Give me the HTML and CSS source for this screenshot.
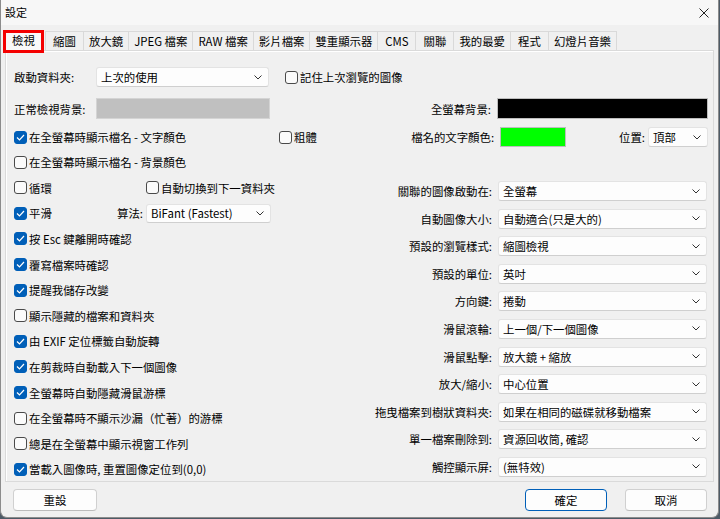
FILE: index.html
```html
<!DOCTYPE html>
<html lang="zh-Hant">
<head>
    <meta charset="UTF-8">
    <title>設定</title>
    <link rel="stylesheet" href="styles.css">
</head>
<body>
<div class="window">
    <div class="titlebar">
        <span class="title">設定</span>
        <svg class="close" width="10" height="10" viewBox="0 0 10 10"><path d="M0.5 0.5 L9.5 9.5 M9.5 0.5 L0.5 9.5" stroke="#222" stroke-width="1" fill="none"/></svg>
    </div>

    <!-- tab strip -->
    <div class="tabs">
        <div class="tab active">檢視</div>
        <div class="tab">縮圖</div>
        <div class="tab">放大鏡</div>
        <div class="tab">JPEG 檔案</div>
        <div class="tab">RAW 檔案</div>
        <div class="tab">影片檔案</div>
        <div class="tab">雙重顯示器</div>
        <div class="tab">CMS</div>
        <div class="tab">關聯</div>
        <div class="tab">我的最愛</div>
        <div class="tab">程式</div>
        <div class="tab">幻燈片音樂</div>
    </div>

    <div class="panel">
        <div class="row row-1">
            <span class="label lbl-left">啟動資料夾:</span>
            <div class="combo combo-start"><span>上次的使用</span><svg class="chev" width="8" height="5" viewBox="0 0 8 5"><path d="M0.5 0.5 L4 4 L7.5 0.5" stroke="#333" fill="none"/></svg></div>
            <label class="check check-remember"><span class="box"></span>記住上次瀏覽的圖像</label>
        </div>

        <div class="row row-2">
            <span class="label lbl-left">正常檢視背景:</span>
            <div class="swatch swatch-gray"></div>
            <div class="right-part">
                <span class="label">全螢幕背景:</span>
                <div class="swatch swatch-black"></div>
            </div>
        </div>

        <div class="row row-3">
            <label class="check check-name"><span class="box on"><svg width="9" height="7" viewBox="0 0 9 7"><path d="M1 3.5 L3.5 6 L8 1" stroke="#fff" stroke-width="1.2" fill="none"/></svg></span>在全螢幕時顯示檔名 - 文字顏色</label>
            <label class="check"><span class="box"></span>粗體</label>
            <div class="right-part">
                <span class="label">檔名的文字顏色:</span>
                <div class="swatch swatch-green"></div>
                <span class="label lbl-pos">位置:</span>
                <div class="combo combo-pos"><span>頂部</span><svg class="chev" width="8" height="5" viewBox="0 0 8 5"><path d="M0.5 0.5 L4 4 L7.5 0.5" stroke="#333" fill="none"/></svg></div>
            </div>
        </div>

        <div class="row row-4">
            <label class="check"><span class="box"></span>在全螢幕時顯示檔名 - 背景顏色</label>
        </div>

        <div class="columns">
            <div class="col-left">
                <div class="crow">
                    <label class="check check-loop"><span class="box"></span>循環</label>
                    <label class="check"><span class="box"></span>自動切換到下一資料夾</label>
                </div>
                <div class="crow">
                    <label class="check check-smooth"><span class="box on"><svg width="9" height="7" viewBox="0 0 9 7"><path d="M1 3.5 L3.5 6 L8 1" stroke="#fff" stroke-width="1.2" fill="none"/></svg></span>平滑</label>
                    <span class="label lbl-algo">算法:</span>
                    <div class="combo combo-algo"><span>BiFant (Fastest)</span><svg class="chev" width="8" height="5" viewBox="0 0 8 5"><path d="M0.5 0.5 L4 4 L7.5 0.5" stroke="#333" fill="none"/></svg></div>
                </div>
                <div class="crow"><label class="check"><span class="box on"><svg width="9" height="7" viewBox="0 0 9 7"><path d="M1 3.5 L3.5 6 L8 1" stroke="#fff" stroke-width="1.2" fill="none"/></svg></span>按 Esc 鍵離開時確認</label></div>
                <div class="crow"><label class="check"><span class="box on"><svg width="9" height="7" viewBox="0 0 9 7"><path d="M1 3.5 L3.5 6 L8 1" stroke="#fff" stroke-width="1.2" fill="none"/></svg></span>覆寫檔案時確認</label></div>
                <div class="crow"><label class="check"><span class="box on"><svg width="9" height="7" viewBox="0 0 9 7"><path d="M1 3.5 L3.5 6 L8 1" stroke="#fff" stroke-width="1.2" fill="none"/></svg></span>提醒我儲存改變</label></div>
                <div class="crow"><label class="check"><span class="box"></span>顯示隱藏的檔案和資料夾</label></div>
                <div class="crow"><label class="check"><span class="box on"><svg width="9" height="7" viewBox="0 0 9 7"><path d="M1 3.5 L3.5 6 L8 1" stroke="#fff" stroke-width="1.2" fill="none"/></svg></span>由 EXIF 定位標籤自動旋轉</label></div>
                <div class="crow"><label class="check"><span class="box on"><svg width="9" height="7" viewBox="0 0 9 7"><path d="M1 3.5 L3.5 6 L8 1" stroke="#fff" stroke-width="1.2" fill="none"/></svg></span>在剪裁時自動載入下一個圖像</label></div>
                <div class="crow"><label class="check"><span class="box on"><svg width="9" height="7" viewBox="0 0 9 7"><path d="M1 3.5 L3.5 6 L8 1" stroke="#fff" stroke-width="1.2" fill="none"/></svg></span>全螢幕時自動隱藏滑鼠游標</label></div>
                <div class="crow"><label class="check"><span class="box"></span>在全螢幕時不顯示沙漏（忙著）的游標</label></div>
                <div class="crow"><label class="check"><span class="box"></span>總是在全螢幕中顯示視窗工作列</label></div>
                <div class="crow"><label class="check"><span class="box on"><svg width="9" height="7" viewBox="0 0 9 7"><path d="M1 3.5 L3.5 6 L8 1" stroke="#fff" stroke-width="1.2" fill="none"/></svg></span>當載入圖像時, 重置圖像定位到(0,0)</label></div>
            </div>

            <div class="col-right">
                <span class="label">關聯的圖像啟動在:</span>
                <div class="combo"><span>全螢幕</span><svg class="chev" width="8" height="5" viewBox="0 0 8 5"><path d="M0.5 0.5 L4 4 L7.5 0.5" stroke="#333" fill="none"/></svg></div>
                <span class="label">自動圖像大小:</span>
                <div class="combo"><span>自動適合(只是大的)</span><svg class="chev" width="8" height="5" viewBox="0 0 8 5"><path d="M0.5 0.5 L4 4 L7.5 0.5" stroke="#333" fill="none"/></svg></div>
                <span class="label">預設的瀏覽樣式:</span>
                <div class="combo"><span>縮圖檢視</span><svg class="chev" width="8" height="5" viewBox="0 0 8 5"><path d="M0.5 0.5 L4 4 L7.5 0.5" stroke="#333" fill="none"/></svg></div>
                <span class="label">預設的單位:</span>
                <div class="combo"><span>英吋</span><svg class="chev" width="8" height="5" viewBox="0 0 8 5"><path d="M0.5 0.5 L4 4 L7.5 0.5" stroke="#333" fill="none"/></svg></div>
                <span class="label">方向鍵:</span>
                <div class="combo"><span>捲動</span><svg class="chev" width="8" height="5" viewBox="0 0 8 5"><path d="M0.5 0.5 L4 4 L7.5 0.5" stroke="#333" fill="none"/></svg></div>
                <span class="label">滑鼠滾輪:</span>
                <div class="combo"><span>上一個/下一個圖像</span><svg class="chev" width="8" height="5" viewBox="0 0 8 5"><path d="M0.5 0.5 L4 4 L7.5 0.5" stroke="#333" fill="none"/></svg></div>
                <span class="label">滑鼠點擊:</span>
                <div class="combo"><span>放大鏡 + 縮放</span><svg class="chev" width="8" height="5" viewBox="0 0 8 5"><path d="M0.5 0.5 L4 4 L7.5 0.5" stroke="#333" fill="none"/></svg></div>
                <span class="label">放大/縮小:</span>
                <div class="combo"><span>中心位置</span><svg class="chev" width="8" height="5" viewBox="0 0 8 5"><path d="M0.5 0.5 L4 4 L7.5 0.5" stroke="#333" fill="none"/></svg></div>
                <span class="label">拖曳檔案到樹狀資料夾:</span>
                <div class="combo"><span>如果在相同的磁碟就移動檔案</span><svg class="chev" width="8" height="5" viewBox="0 0 8 5"><path d="M0.5 0.5 L4 4 L7.5 0.5" stroke="#333" fill="none"/></svg></div>
                <span class="label">單一檔案刪除到:</span>
                <div class="combo"><span>資源回收筒, 確認</span><svg class="chev" width="8" height="5" viewBox="0 0 8 5"><path d="M0.5 0.5 L4 4 L7.5 0.5" stroke="#333" fill="none"/></svg></div>
                <span class="label">觸控顯示屏:</span>
                <div class="combo"><span>(無特效)</span><svg class="chev" width="8" height="5" viewBox="0 0 8 5"><path d="M0.5 0.5 L4 4 L7.5 0.5" stroke="#333" fill="none"/></svg></div>
            </div>
        </div>
    </div>

    <div class="footer">
        <button type="button" class="btn">重設</button>
        <div class="btn-group">
            <button type="button" class="btn btn-default">確定</button>
            <button type="button" class="btn">取消</button>
        </div>
    </div>
</div>
</body>
</html>
```

FILE: styles.css
```css
* {
    box-sizing: border-box;
}
body {
    margin: 0;
    background: #4d5a66;
    font-family: "Noto Sans CJK TC", "Noto Sans", sans-serif;
    font-size: 11.4px;
    color: #000;
}
.window {
    width: 719px;
    height: 518px;
    background: #f0f0f0;
    border-left: 1px solid #8c8c8c;
    border-right: 1px solid #8c8c8c;
    border-bottom: 1px solid #8c8c8c;
    border-radius: 0 0 7px 7px;
    overflow: hidden;
    display: flex;
    flex-direction: column;
}
.titlebar {
    height: 25px;
    background: #f7f7f7;
    display: flex;
    align-items: center;
    justify-content: space-between;
    padding: 0 9px 0 4px;
    flex-shrink: 0;
}
.title {
    font-size: 11px;
    line-height: 25px;
}

/* tabs */
.tabs {
    display: flex;
    align-items: flex-end;
    height: 25px;
    padding-left: 2px;
    flex-shrink: 0;
}
.tab {
    height: 19px;
    min-width: 39px;
    padding: 0 5px;
    line-height: 18px;
    text-align: center;
    border: 1px solid #d9d9d9;
    border-bottom: none;
    background: #f0f0f0;
    margin-left: -1px;
    white-space: nowrap;
}
.tab.active {
    height: 23px;
    width: 41px;
    margin: 0 2px -3px 0;
    border: 3px solid #f40000;
    background: #f9f9f9;
    line-height: 15px;
    position: relative;
    z-index: 2;
}

/* panel */
.panel {
    margin: 0 4px 0 4px;
    height: 432px;
    border: 1px solid #dadada;
    box-shadow: inset 1px 1px 0 #fff;
    padding: 16px 5px 0 8px;
    flex-shrink: 0;
}
.row {
    display: flex;
    align-items: center;
    height: 20px;
}
.row-2 {
    margin-top: 11px;
    height: 21px;
}
.row-3 {
    margin-top: 8px;
}
.row-4 {
    margin-top: 5px;
}
.label {
    white-space: nowrap;
    line-height: 20px;
}
.lbl-left {
    width: 82px;
}
.right-part {
    margin-left: auto;
    display: flex;
    align-items: center;
}
.right-part .label {
    margin-right: 6px;
}
.right-part .lbl-pos {
    margin-left: 53px;
    margin-right: 3px;
}

/* combos */
.combo {
    height: 20px;
    background: #fdfdfd;
    border: 1px solid #e3e3e3;
    border-bottom-color: #cfcfcf;
    border-radius: 3px;
    display: flex;
    align-items: center;
    justify-content: space-between;
    padding: 0 6px 0 4px;
    white-space: nowrap;
}
.combo-start {
    width: 173px;
}
.combo-pos {
    width: 60px;
}
.combo-algo {
    width: 125px;
    height: 19px;
}

/* colour swatches */
.swatch {
    height: 21px;
    border: 1px solid #a8a8a8;
}
.swatch-gray {
    width: 174px;
    background: #c0c0c0;
    border-color: #d4d4d4;
}
.swatch-black {
    width: 211px;
    background: #000;
    border-color: #bdbdbd;
}
.swatch-green {
    width: 66px;
    height: 20px;
    background: #00ff00;
    border-color: #bdbdbd;
}

/* checkboxes */
.check {
    display: flex;
    align-items: center;
    white-space: nowrap;
    line-height: 20px;
}
.box {
    width: 13px;
    height: 13px;
    border: 1px solid #4a4a4a;
    border-radius: 3px;
    background: #fbfbfb;
    margin-right: 2px;
    display: flex;
    align-items: center;
    justify-content: center;
}
.box.on {
    background: #005fb8;
    border-color: #005fb8;
}
.check-remember {
    margin-left: 16px;
}
.check-name {
    width: 265px;
}

/* lower two columns */
.columns {
    display: flex;
}
.col-left {
    width: 330px;
    padding-top: 3px;
}
.crow {
    display: flex;
    align-items: center;
    height: 25.6px;
}
.check-loop {
    width: 132px;
}
.check-smooth {
    width: 103px;
}
.lbl-algo {
    width: 29px;
}
.col-right {
    flex: 1;
    display: grid;
    grid-template-columns: 1fr 209px;
    grid-auto-rows: 20px;
    row-gap: 7.6px;
    column-gap: 6px;
    align-items: center;
    padding-top: 9px;
    margin-right: 1px;
}
.col-right .label {
    text-align: right;
}

/* buttons */
.footer {
    display: flex;
    justify-content: space-between;
    padding: 7px 11px 0 12px;
}
.btn-group {
    display: flex;
    gap: 18px;
}
.btn {
    width: 84px;
    height: 22px;
    font-family: inherit;
    font-size: 11.4px;
    background: #fdfdfd;
    border: 1px solid #d0d0d0;
    border-bottom-color: #bcbcbc;
    border-radius: 4px;
    padding: 0;
    color: #000;
}
.btn-group .btn {
    width: 82px;
}
.btn-default {
    border: 1px solid #005fb8;
}
```
